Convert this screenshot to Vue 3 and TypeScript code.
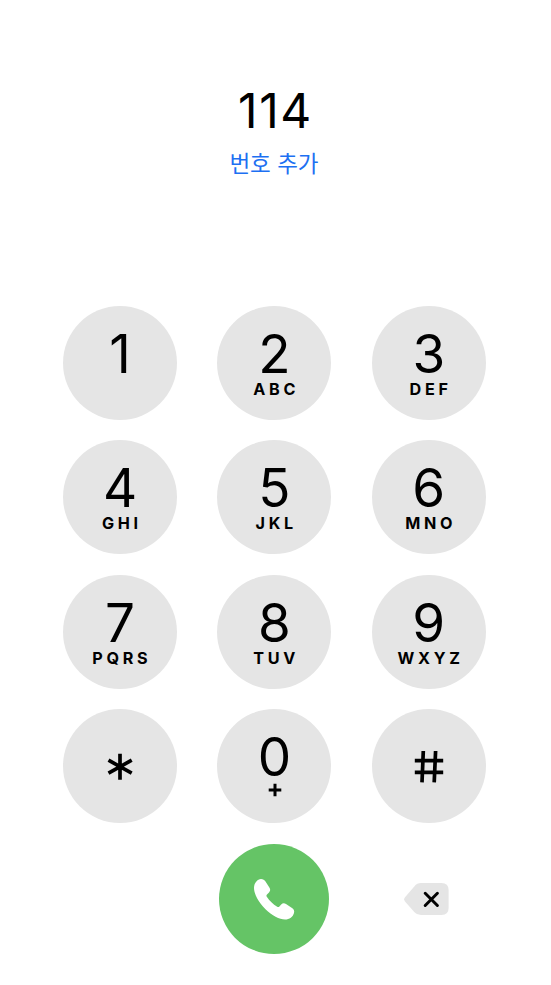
<script setup lang="ts">
interface Key { digit: string; letters?: string; kind?: string }
const keys: Key[] = [
  { digit: '1' }, { digit: '2', letters: 'ABC' }, { digit: '3', letters: 'DEF' },
  { digit: '4', letters: 'GHI' }, { digit: '5', letters: 'JKL' }, { digit: '6', letters: 'MNO' },
  { digit: '7', letters: 'PQRS' }, { digit: '8', letters: 'TUV' }, { digit: '9', letters: 'WXYZ' },
  { digit: '*', kind: 'star' }, { digit: '0', kind: 'zero' }, { digit: '#', kind: 'hash' },
]
</script>

<template>
  <main class="dialer">
    <header class="display">
      <div class="number">114</div>
      <a class="add">번호 추가</a>
    </header>
    <section class="pad">
      <button v-for="k in keys" :key="k.digit" class="key" :class="k.kind">
        <svg v-if="k.kind === 'star'" class="symbol" viewBox="0 0 114 114"><path d="M57 44.7V70.7M45.5 51.2L68.7 64.2M68.7 51.2L45.5 64.2" /></svg>
        <svg v-else-if="k.kind === 'hash'" class="symbol" viewBox="0 0 114 114"><path d="M51.3 42L50 73.4M63.6 42L62.2 73.4M42.8 51.7H71.2M42.8 63.3H71.2" /></svg>
        <template v-else>
          <span class="digit">{{ k.digit }}</span>
          <svg v-if="k.kind === 'zero'" class="plus" viewBox="0 0 14 14"><path d="M7 .7V13.3M.7 7H13.3" /></svg>
          <span v-else-if="k.letters" class="letters">{{ k.letters }}</span>
        </template>
      </button>
    </section>
    <footer class="actions">
      <button class="call" aria-label="Call">
        <svg viewBox="0 0 110 110"><path d="M35 44C35 39 38.5 35 42 35C44 35 45.5 36 46.5 37.5L50.5 43.8C51.6 45.5 51.3 47 50 48.5L48 50.6C47.3 51.4 47.3 52 47.8 52.8C50.5 56.8 54 60.3 58.2 62.7C59 63.2 59.7 63.1 60.4 62.4L62.2 60.5C63.5 59.1 65.2 58.8 67 60L73 64C75 65.3 75.6 67 75 69C74 72.8 70.5 75.6 66 75.6C60.5 75.6 53 71.8 46.5 65.3C39.5 58.3 35 50 35 44Z" /></svg>
      </button>
      <button class="delete" aria-label="Delete">
        <svg viewBox="0 0 46 34"><path class="shape" d="M1.8 15.6L11.5 4.2Q14 1 18 1H38.5Q45.6 1 45.6 8V26Q45.6 33 38.5 33H18Q14 33 11.5 30.2L1.8 19.2Q.2 17.4 1.8 15.6Z" /><path class="cross" d="M22.2 11.3L34.4 23.5M34.4 11.3L22.2 23.5" /></svg>
      </button>
    </footer>
  </main>
</template>

<style>
body { background: #fff; }
</style>
<style scoped>
.dialer { box-sizing: border-box; width: 551px; height: 985px; padding-top: 81px; background: #fff; color: #000; font-family: Inter, "Noto Sans CJK KR", sans-serif; overflow: hidden; }
.display { height: 225px; display: flex; flex-direction: column; align-items: center; }
.number { font-size: 48px; line-height: 60px; letter-spacing: 1.6px; }
.add { margin-top: 8px; color: #1d70f2; font-size: 22.5px; line-height: 30px; padding-right: 3px; }
button { border: 0; padding: 0; font: inherit; color: inherit; }
.pad { display: grid; grid-template-columns: repeat(3, 114px); column-gap: 40.4px; row-gap: 20.3px; padding-left: 63px; }
.key { height: 114px; border-radius: 50%; background: #e5e5e5; display: flex; flex-direction: column; align-items: center; }
.digit { margin-top: 26px; font-size: 53px; line-height: 44px; }
.letters { margin-top: 4px; font-size: 16.2px; line-height: 18px; font-weight: 650; letter-spacing: 3.7px; padding-left: 3.7px; }
.symbol { width: 114px; height: 114px; fill: none; stroke: #000; stroke-width: 3.7; }
.plus { width: 14px; height: 14px; margin: 4px 0 0 1px; stroke: #000; stroke-width: 3; }
.actions { display: grid; grid-template-columns: 110px 46px; column-gap: 74px; align-items: center; padding: 21px 0 0 219px; }
.call { width: 110px; height: 110px; border-radius: 50%; background: #65c466; }
.call svg { display: block; fill: #fff; }
.delete { width: 46px; height: 34px; background: none; }
.delete svg { display: block; }
.shape { fill: #e5e5e5; }
.cross { fill: none; stroke: #000; stroke-width: 3; stroke-linecap: round; }
</style>
